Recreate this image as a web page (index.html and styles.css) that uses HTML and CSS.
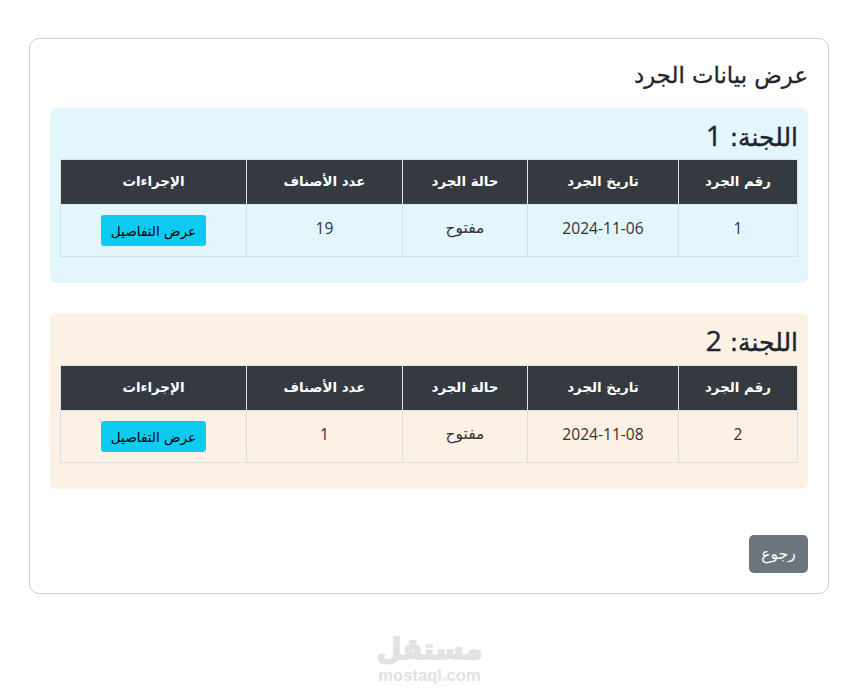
FILE: index.html
```html
<!DOCTYPE html>
<html lang="ar" dir="rtl">
<head>
<meta charset="utf-8">
<title>عرض بيانات الجرد</title>
<link rel="stylesheet" href="styles.css">
</head>
<body>
<div class="container">
  <h2 class="page-title">عرض بيانات الجرد</h2>

  <div class="panel panel-blue">
    <h3 class="panel-title">اللجنة: <span class="title-num">1</span></h3>
    <table class="inv-table">
      <thead>
        <tr>
          <th class="col-num">رقم الجرد</th>
          <th class="col-date">تاريخ الجرد</th>
          <th class="col-state">حالة الجرد</th>
          <th class="col-count">عدد الأصناف</th>
          <th>الإجراءات</th>
        </tr>
      </thead>
      <tbody>
        <tr>
          <td class="num">1</td>
          <td class="num">2024-11-06</td>
          <td>مفتوح</td>
          <td class="num">19</td>
          <td class="cell-action"><a class="btn-info">عرض التفاصيل</a></td>
        </tr>
      </tbody>
    </table>
  </div>

  <div class="panel panel-orange">
    <h3 class="panel-title">اللجنة: <span class="title-num">2</span></h3>
    <table class="inv-table">
      <thead>
        <tr>
          <th class="col-num">رقم الجرد</th>
          <th class="col-date">تاريخ الجرد</th>
          <th class="col-state">حالة الجرد</th>
          <th class="col-count">عدد الأصناف</th>
          <th>الإجراءات</th>
        </tr>
      </thead>
      <tbody>
        <tr>
          <td class="num">2</td>
          <td class="num">2024-11-08</td>
          <td>مفتوح</td>
          <td class="num">1</td>
          <td class="cell-action"><a class="btn-info">عرض التفاصيل</a></td>
        </tr>
      </tbody>
    </table>
  </div>

  <div class="actions">
    <a class="btn-back">رجوع</a>
  </div>
</div>

<div class="watermark">
  <span class="wm-ar">مستقل</span>
  <span class="wm-en">mostaql.com</span>
</div>
</body>
</html>
```

FILE: styles.css
```css
* {
    box-sizing: border-box;
}

body {
    margin: 0;
    padding: 0;
    height: 698px;
    overflow: hidden;
    background: #fff;
    color: #212529;
    font-family: "DejaVu Sans", "Noto Sans", sans-serif;
    font-size: 15.5px;
    position: relative;
}

.container {
    width: 800px;
    height: 556px;
    margin: 38px 30px 0 29px;
    padding: 20px;
    border: 1px solid #ccc;
    border-radius: 10px;
}

.page-title {
    margin: 0 0 16px;
    height: 33px;
    font-size: 22.8px;
    line-height: 32px;
    font-weight: 500;
    -webkit-text-stroke: 0.3px #212529;
}

.panel {
    padding: 10px;
    border-radius: 6px;
    margin-bottom: 30px;
    height: 175px;
}

.panel-blue {
    background: #e3f5fd;
}

.panel-orange {
    height: 176px;
    background: #fdf1e5;
}

.panel-title {
    margin: 0 0 4px;
    height: 37px;
    font-size: 25px;
    line-height: 34px;
    font-weight: 500;
    -webkit-text-stroke: 0.4px #212529;
}

.panel-orange .panel-title {
    margin-bottom: 5px;
}

.title-num {
    font-family: "Open Sans", sans-serif;
    font-size: 28px;
}

.inv-table {
    width: 738px;
    border-collapse: collapse;
    table-layout: fixed;
}

.inv-table th {
    height: 45px;
    padding: 0 0 1px;
    background: #343a40;
    color: #fff;
    font-size: 13.4px;
    font-weight: 700;
    text-align: center;
    border: 1px solid #dee2e6;
}

.inv-table td {
    height: 52px;
    padding: 10px 0 0;
    text-align: center;
    vertical-align: top;
    line-height: 26px;
    color: #333;
    border: 1px solid #d5dfe6;
}

.inv-table td.num {
    font-family: "Open Sans", sans-serif;
    font-size: 15.6px;
    line-height: 26px;
}

.col-num {
    width: 119px;
}

.col-date {
    width: 151px;
}

.col-state {
    width: 125px;
}

.col-count {
    width: 156px;
}

.btn-info {
    display: inline-block;
    vertical-align: top;
    width: 105px;
    height: 31px;
    line-height: 32px;
    background: #0dcaf0;
    color: #000;
    border-radius: 3px;
    font-size: 13.6px;
    white-space: nowrap;
}

.actions {
    display: flex;
    justify-content: flex-start;
    margin-top: 46px;
}

.btn-back {
    display: block;
    width: 59px;
    height: 38px;
    line-height: 38px;
    text-align: center;
    background: #6c757d;
    color: #fff;
    border-radius: 5px;
    font-size: 15.5px;
}

.watermark {
    position: absolute;
    left: 377px;
    top: 630px;
    width: 105px;
    display: flex;
    flex-direction: column;
    align-items: center;
    color: #e2e2e2;
}

.wm-ar {
    font-family: "DejaVu Sans", sans-serif;
    font-size: 29px;
    font-weight: 700;
    line-height: 38px;
    -webkit-text-stroke: 1.5px #e2e2e2;
}

.wm-en {
    font-family: "Liberation Sans", sans-serif;
    font-size: 16.6px;
    font-weight: 700;
    line-height: 16px;
}
```
